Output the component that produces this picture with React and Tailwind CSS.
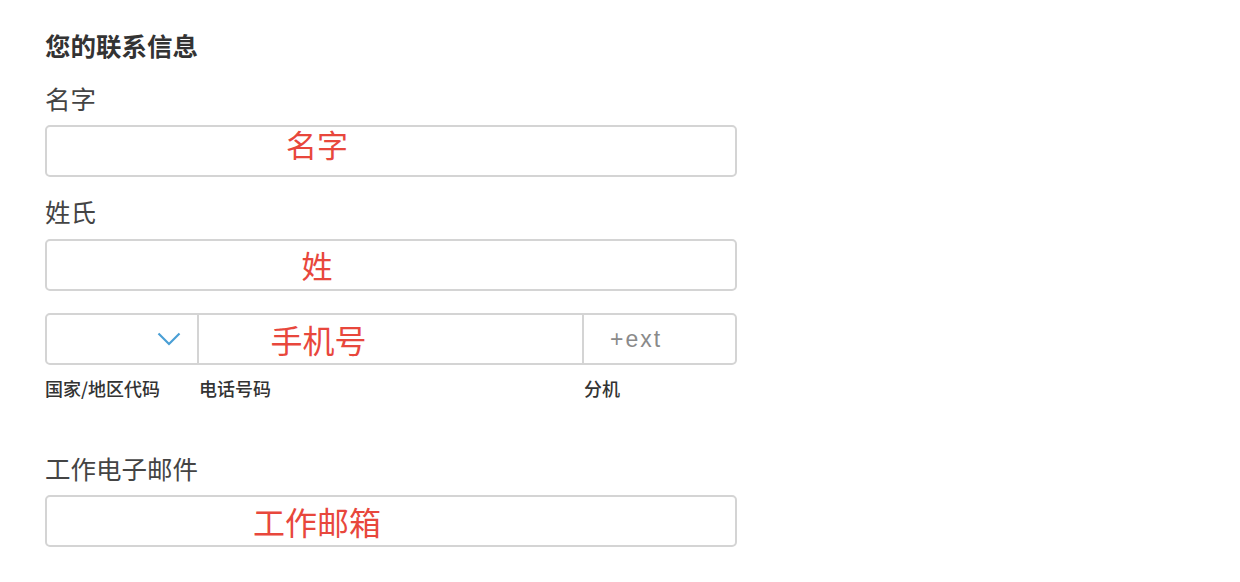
export default function App() {
  const font = { fontFamily: '"Noto Sans CJK SC", "Noto Sans", sans-serif' };
  return (
    <div className="min-h-screen bg-white" style={font}>
      <div className="pl-[45px] pt-[28px] w-[737px]">
        <div className="text-[25.5px] leading-[34px] font-bold text-[#333]">您的联系信息</div>

        <div className="mt-[19px] text-[25.5px] leading-[34px] text-[#444]">名字</div>
        <div className="mt-[10px] h-[52px] rounded-[5px] border-2 border-[#d4d4d4] flex items-center justify-center pr-[148px] pb-[13px]">
          <span className="text-[31px] text-[#e8473c]">名字</span>
        </div>

        <div className="mt-[17px] text-[25.5px] leading-[34px] text-[#444]">姓氏</div>
        <div className="mt-[11px] h-[52px] rounded-[5px] border-2 border-[#d4d4d4] flex items-center justify-center pr-[148px]">
          <span className="text-[31px] text-[#e8473c]">姓</span>
        </div>

        <div className="mt-[22px] h-[52px] rounded-[5px] border-2 border-[#d4d4d4] flex">
          <div className="w-[152px] border-r-2 border-[#d4d4d4] flex items-center justify-end pr-[16px]">
            <svg width="24" height="14" viewBox="0 0 24 14" fill="none">
              <polyline points="1.5,1.5 12,12 22.5,1.5" stroke="#4a9fd5" strokeWidth="2.2" />
            </svg>
          </div>
          <div className="w-[385px] border-r-2 border-[#d4d4d4] flex items-center justify-center pr-[144px]">
            <span className="text-[32px] text-[#e8473c]">手机号</span>
          </div>
          <div className="flex-1 flex items-center pl-[26px]">
            <span className="text-[23px] tracking-[2px] text-[#8a8a8a]" style={{ fontFamily: '"Liberation Sans", Arial, sans-serif' }}>+ext</span>
          </div>
        </div>
        <div className="mt-[11px] flex text-[18px] leading-[24px] font-medium text-[#333]">
          <div className="w-[154px]">国家/地区代码</div>
          <div className="w-[385px]">电话号码</div>
          <div>分机</div>
        </div>

        <div className="mt-[51px] text-[25.5px] leading-[34px] text-[#444]">工作电子邮件</div>
        <div className="mt-[10px] h-[52px] rounded-[5px] border-2 border-[#d4d4d4] flex items-center justify-center pr-[148px]">
          <span className="text-[32px] text-[#e8473c]">工作邮箱</span>
        </div>
      </div>
    </div>
  );
}
